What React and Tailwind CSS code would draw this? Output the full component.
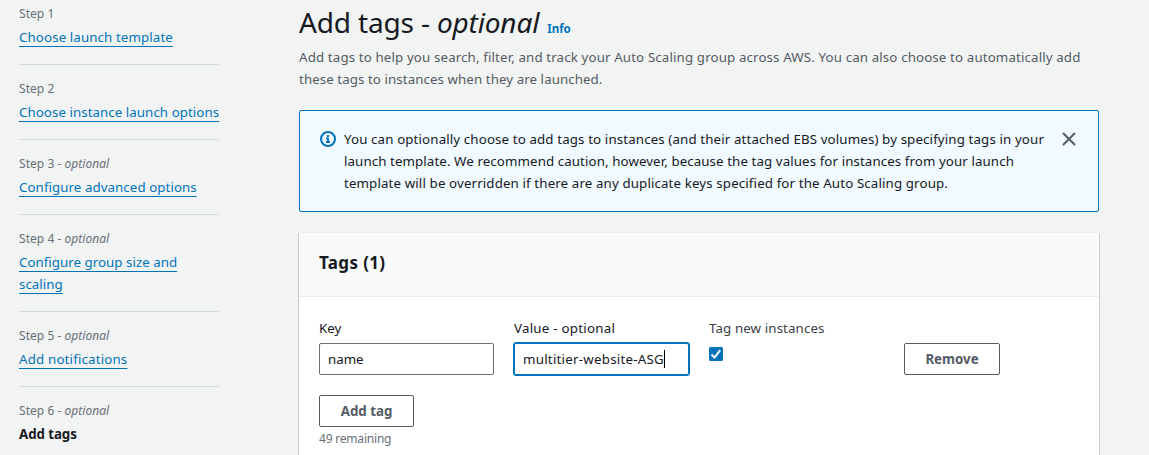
const steps = [
  { n: 1, lines: [["Choose launch template", "tracking-[0.11px]"]] },
  { n: 2, lines: [["Choose instance launch options", "tracking-[0.06px]"]] },
  { n: 3, optional: true, lines: [["Configure advanced options", "tracking-[0.07px]"]] },
  { n: 4, optional: true, lines: [["Configure group size and", "tracking-[0.03px]"], ["scaling", "tracking-[0.05px]"]] },
  { n: 5, optional: true, lines: [["Add notifications", "tracking-[0.17px]"]] },
  { n: 6, optional: true, current: true, lines: [["Add tags", "tracking-[-0.06px]"]] },
];

function Step({ step }) {
  return (
    <li className="border-b border-[#d5dbdb] pb-4 mb-4">
      <div className="h-4 text-[12px] leading-4 text-[#687078] tracking-[0.04px]">
        Step {step.n}
        {step.optional && <> - <i>optional</i></>}
      </div>
      <div className="mt-1">
        {step.lines.map(([text, tracking]) => (
          <div key={text} className={`h-[22px] leading-[22px] ${tracking}`}>
            {step.current ? (
              <span className="font-bold text-[#16191f]">{text}</span>
            ) : (
              <a className="text-[#0073bb] underline decoration-1 underline-offset-4 [text-decoration-skip-ink:none]">{text}</a>
            )}
          </div>
        ))}
      </div>
    </li>
  );
}

function InfoIcon() {
  return (
    <svg className="h-4 w-4 shrink-0" viewBox="0 0 16 16" fill="none" stroke="#0073bb">
      <circle cx="8" cy="8" r="7" strokeWidth="2" />
      <path d="M7 5h2M6 7.5h2V11M6 11h4" strokeWidth="1.8" />
    </svg>
  );
}

export default function App() {
  return (
    <div className="flex h-[455px] w-[1149px] overflow-hidden bg-[#f2f3f3] font-['Noto_Sans',sans-serif] text-[13.3px] text-[#16191f]">
      <nav className="ml-[19px] w-[200px] shrink-0 pt-1.5 whitespace-nowrap">
        <ul>
          {steps.map((s) => <Step key={s.n} step={s} />)}
        </ul>
      </nav>

      <main className="ml-20 w-[800px] shrink-0 whitespace-nowrap">
        <div className="flex h-[46px] items-baseline pt-1">
          <h1 className="text-[28px] leading-9 tracking-[-0.16px]">
            Add tags - <i>optional</i>
          </h1>
          <a className="ml-2 text-[11.5px] font-bold text-[#0073bb]">Info</a>
        </div>
        <div className="leading-[22px] text-[#545b64]">
          <p className="tracking-[0.135px]">Add tags to help you search, filter, and track your Auto Scaling group across AWS. You can also choose to automatically add</p>
          <p className="tracking-[0.08px]">these tags to instances when they are launched.</p>
        </div>

        <section className="mt-5 flex h-[102px] rounded-xs border border-[#0073bb] bg-[#f1faff] pt-[17px] pl-5">
          <div className="pt-[3px]"><InfoIcon /></div>
          <div className="ml-2 w-[712px] leading-[22px]">
            <p className="tracking-[0.13px]">You can optionally choose to add tags to instances (and their attached EBS volumes) by specifying tags in your</p>
            <p className="tracking-[0.095px]">launch template. We recommend caution, however, because the tag values for instances from your launch</p>
            <p className="tracking-[0.13px]">template will be overridden if there are any duplicate keys specified for the Auto Scaling group.</p>
          </div>
          <svg className="mt-[3px] ml-[5px] h-4 w-4" viewBox="0 0 16 16" fill="none" stroke="#545b64" strokeWidth="2">
            <path d="M2 2l12 12M14 2L2 14" />
          </svg>
        </section>

        <section className="-mx-px mt-5 h-[240px] rounded-t-xs border-x border-t border-x-[#c8cfcf] border-t-[#eaeded] bg-white">
          <header className="flex h-16 items-center border-b border-[#eaeded] bg-[#fafafa] pl-5">
            <h2 className="-mt-1 text-[17px] leading-[22px] font-bold tracking-[0.36px]">Tags (1)</h2>
          </header>
          <div className="pt-5 pl-5">
            <div className="grid grid-cols-[175px_175px_175px_175px] gap-x-5 leading-[22px]">
              <div>
                <label className="block">Key</label>
                <div className="mt-1 h-8 rounded-xs border border-[#687078] px-2 leading-[30px]">name</div>
              </div>
              <div>
                <label className="block tracking-[0.25px]">Value - optional</label>
                <div className="mt-1 flex h-8 items-center rounded-xs border border-[#0073bb] px-2 ring-1 ring-[#0073bb]">
                  <span className="tracking-[0.25px]">multitier-website-ASG</span>
                  <span className="h-[18px] w-px bg-black" />
                </div>
              </div>
              <div>
                <label className="block tracking-[0.12px] text-[#3b4048]">Tag new instances</label>
                <svg className="mt-2 h-3.5 w-3.5" viewBox="0 0 14 14" fill="none">
                  <rect width="14" height="14" rx="1.5" fill="#0073bb" />
                  <path d="M2.5 7.5l3 3L11.2 3.2" stroke="white" strokeWidth="2" />
                </svg>
              </div>
              <div className="pt-[26px]">
                <button className="h-8 w-24 rounded-xs border border-[#545b64] font-bold text-[#545b64]">Remove</button>
              </div>
            </div>
            <button className="mt-5 block h-8 w-[95px] rounded-xs border border-[#545b64] pt-px font-bold text-[#545b64]">Add tag</button>
            <p className="mt-1 text-[12px] leading-4 tracking-[-0.2px] text-[#687078]">49 remaining</p>
          </div>
        </section>
      </main>
    </div>
  );
}
